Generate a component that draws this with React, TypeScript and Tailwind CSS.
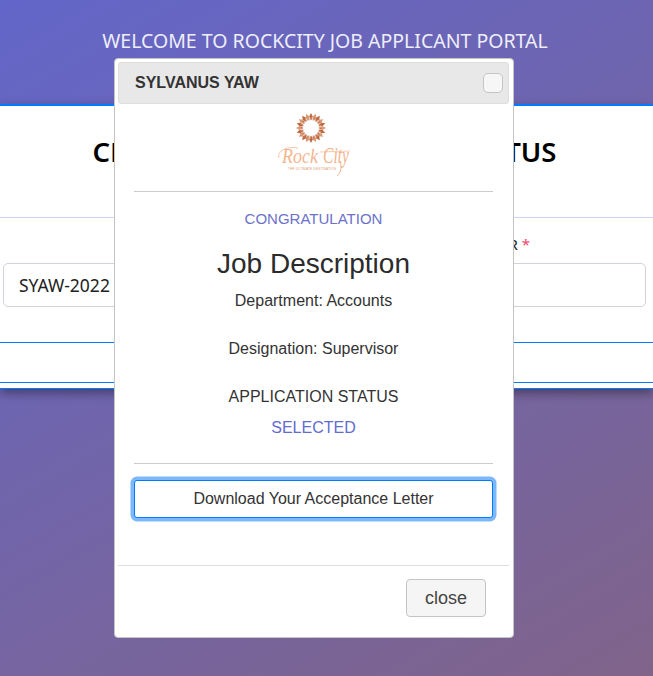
const rays = Array.from({ length: 20 }, (_, i) => (i * 360) / 20);

function Logo() {
  return (
    <svg width="80" height="66" viewBox="0 0 80 66" className="block" aria-label="Rock City">
      <circle cx="37" cy="17" r="12" fill="#d49573" />
      {rays.map((a) => (
        <path key={a} d="M33.8 8 L37 2 L40.2 8 Z" fill={a % 36 === 0 ? "#bf6a42" : "#d99a78"} transform={`rotate(${a} 37 17)`} />
      ))}
      {rays.map((a) => (
        <path key={`i${a}`} d="M36.4 9.5 L37.6 9.5 L37 4 Z" fill="#ffffff" opacity="0.7" transform={`rotate(${a + 9} 37 17)`} />
      ))}
      <circle cx="37" cy="17" r="8" fill="#ffffff" />
      <path d="M5 47 C3 40 12 35 24 37" fill="none" stroke="#f3b58f" strokeWidth="0.8" />
      <path d="M66 50 C68 56 67 62 63 65" fill="none" stroke="#f3b58f" strokeWidth="1" />
      <path d="M46 41 L76 40" fill="none" stroke="#f3b58f" strokeWidth="0.7" />
      <text x="8" y="52" fontFamily="'Liberation Serif', serif" fontStyle="italic" fontSize="22" fill="#f3b58f" textLength="36" lengthAdjust="spacingAndGlyphs">Rock</text>
      <text x="49" y="52" fontFamily="'Liberation Serif', serif" fontStyle="italic" fontSize="23" fill="#f3b58f" textLength="26" lengthAdjust="spacingAndGlyphs">City</text>
      <text x="14" y="58.5" fontFamily="'Liberation Sans', sans-serif" fontSize="3.2" fill="#dd9c78" textLength="48">THE ULTIMATE DESTINATION</text>
    </svg>
  );
}

export default function App() {
  return (
    <div className="relative h-[676px] w-[653px] overflow-hidden bg-[linear-gradient(150deg,#6366c9_0%,#80648a_100%)]">
      <div className="flex h-[104px] items-start justify-center pr-[3px] pt-[27px] font-['Noto_Sans',sans-serif] text-[19.5px] leading-[28px] text-[#eeeefa]">
        WELCOME TO ROCKCITY JOB APPLICANT PORTAL
      </div>
      <div className="h-[285px] border-t-2 border-b border-[#007bff] bg-white shadow-[0_4px_10px_rgba(0,0,0,0.4)]">
        <div className="flex h-[112px] justify-center whitespace-nowrap border-b border-[#c3daf2] pt-[29px] font-['Noto_Sans',sans-serif] text-[27.5px] font-semibold leading-[34px] text-black">
          <span className="ml-[-4px]">CHECK YOUR APPLICATION STATUS</span>
        </div>
        <div className="flex h-[125px] flex-col border-b border-[#007bff] pl-[3px]">
          <div className="flex h-[45px] justify-end pr-[123px] pt-[15px] font-['Noto_Sans',sans-serif] text-[15px] leading-[22px] text-[#222]">
            NUMBER <span className="ml-[4px] text-[#f0446a]">*</span>
          </div>
          <div className="mr-[7px] flex h-[44px] items-center rounded-[5px] border border-[#ced4da] bg-white pl-[15px] font-['Noto_Sans',sans-serif] text-[17.5px] text-[#222]">
            SYAW-2022
          </div>
        </div>
        <div className="h-[40px] border-b border-[#007bff]" />
      </div>

      <div className="absolute left-[114px] top-[58px] flex h-[580px] w-[400px] flex-col rounded-[4px] border border-[#c4c4c4] bg-white py-[3px] pl-[3px] pr-[4px] font-['Liberation_Sans',sans-serif] text-[#333]">
        <div className="flex h-[42px] shrink-0 items-center justify-between rounded-[3px] border border-[#dedede] bg-[#e8e8e8] pl-[16px] pr-[5px]">
          <span className="text-[16px] font-bold leading-[22px]">SYLVANUS YAW</span>
          <span className="h-[20px] w-[20px] rounded-[5px] border border-[#c5c5c5] bg-[#f6f6f6]" />
        </div>
        <div className="flex flex-1 flex-col items-center">
          <div className="mt-[7px]"><Logo /></div>
          <div className="mt-[14px] h-px w-[359px] bg-[#cccccc]" />
          <div className="mt-[18px] text-[15px] leading-[17px] text-[#6c72c9]">CONGRATULATION</div>
          <div className="mt-[20px] text-[28px] leading-[34px] text-[#2b2b2b]">Job Description</div>
          <div className="mt-[8px] text-[16px] leading-[24px]">Department: Accounts</div>
          <div className="mt-[24px] text-[16px] leading-[24px]">Designation: Supervisor</div>
          <div className="mt-[24px] text-[16px] leading-[24px]">APPLICATION STATUS</div>
          <div className="mt-[7px] text-[16px] leading-[24px] text-[#5f6cd0]">SELECTED</div>
          <div className="mt-[23px] h-px w-[359px] bg-[#cccccc]" />
          <button className="mt-[16px] h-[38px] w-[359px] rounded-[3px] border border-[#007bff] bg-white text-[16px] leading-[22px] text-[#333] shadow-[0_0_0_3.5px_#7cb8fb]">
            Download Your Acceptance Letter
          </button>
        </div>
        <div className="flex h-[69px] shrink-0 items-start justify-end border-t border-[#dddddd] pr-[23px] pt-[13px]">
          <button className="h-[38px] w-[80px] rounded-[4px] border border-[#c5c5c5] bg-[#f5f5f5] text-[18px] text-[#444]">close</button>
        </div>
      </div>
    </div>
  );
}
